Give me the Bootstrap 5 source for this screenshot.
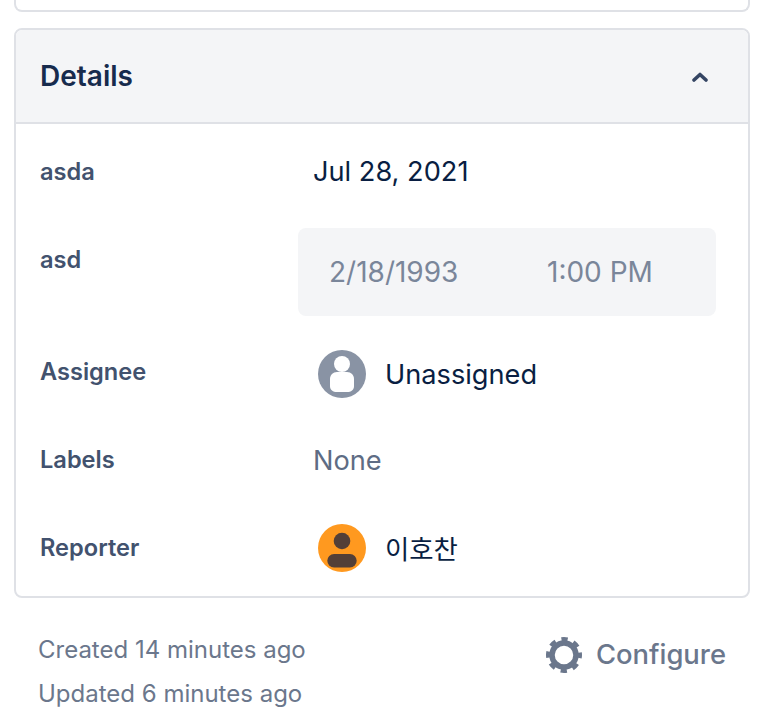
<!DOCTYPE html>
<html lang="en">
<head>
    <meta charset="UTF-8">
    <title>Details</title>
    <link href="https://cdn.jsdelivr.net/npm/bootstrap@5.3.0/dist/css/bootstrap.min.css" rel="stylesheet">
    <style>
        body {
            font-family: Inter, "Noto Sans CJK KR", sans-serif;
            background: #fff;
            color: #091e42;
        }
        .page-wrap { padding: 0 34px 0 14px; }
        .prev-panel {
            height: 12px;
            border: 2px solid #dfe1e6;
            border-top: 0;
            border-radius: 0 0 8px 8px;
            margin-bottom: 16px;
        }
        .details-panel {
            border: 2px solid #dfe1e6;
            border-radius: 8px;
            --bs-card-inner-border-radius: 6px;
        }
        .details-head {
            height: 94px;
            padding: 2px 40px 0 24px;
            background: #f4f5f7;
            border-bottom: 2px solid #dfe1e6;
        }
        .details-title {
            font-size: 28px;
            font-weight: 600;
            color: #172b4d;
            margin: 0;
        }
        .details-body { padding: 16px 32px 24px 24px; }
        .field-label {
            width: 258px;
            flex-shrink: 0;
            padding-top: 8px;
            font-size: 23.6px;
            font-weight: 600;
            line-height: 48px;
            color: #42526e;
        }
        .field-value { flex-grow: 1; font-size: 27.2px; line-height: 48px; }
        .gap-a { margin-bottom: 32px; }
        .gap-b { margin-bottom: 24px; }
        .gap-c { margin-bottom: 30px; }
        .text-value { padding: 8px 0 0 15px; }
        .text-none { color: #5e6c84; padding-top: 9px; margin-bottom: -1px; }
        .date-box {
            height: 88px;
            padding-left: 31px;
            border-radius: 8px;
            background: #f4f5f7;
            color: #7a869a;
            font-size: 28px;
            line-height: 88px;
        }
        .date-box span:first-child { width: 218px; }
        .person-value { height: 58px; padding: 10px 0 0 20px; }
        .person-value.low { height: 56px; padding-top: 8px; }
        .person-name { margin-left: 19px; padding-top: 1px; }
        .name-ko { font-size: 26.4px; }
        .page-foot { padding: 30px 24px 0 24px; color: #6b778c; }
        .stamps { font-size: 24px; line-height: 44px; }
        .configure { font-size: 27.4px; font-weight: 500; gap: 14px; margin-top: 3px; height: 48px; }
    </style>
</head>
<body>
    <div class="page-wrap">
        <div class="prev-panel"></div>

        <div class="card details-panel">
            <div class="card-header details-head d-flex align-items-center justify-content-between">
                <h2 class="details-title">Details</h2>
                <svg width="16" height="12" viewBox="0 0 16 12" class="d-block">
                    <path d="M2 9 8 3.500l6 5.500" fill="none" stroke="#344563" stroke-width="3.600" stroke-linecap="round" stroke-linejoin="round"/>
                </svg>
            </div>
            <div class="card-body details-body">
                <div class="d-flex gap-a">
                    <div class="field-label">asda</div>
                    <div class="field-value text-value">Jul 28, 2021</div>
                </div>
                <div class="d-flex gap-b">
                    <div class="field-label">asd</div>
                    <div class="field-value date-box d-flex">
                        <span>2/18/1993</span>
                        <span>1:00 PM</span>
                    </div>
                </div>
                <div class="d-flex gap-c">
                    <div class="field-label">Assignee</div>
                    <div class="field-value person-value d-flex align-items-start">
                        <svg width="48" height="48" viewBox="0 0 48 48" class="flex-shrink-0">
                            <circle cx="24" cy="24" r="24" fill="#8993a4"/>
                            <circle cx="24" cy="14" r="8" fill="#fff"/>
                            <path d="M12 29c0-4 3-7 7-7h10c4 0 7 3 7 7v7c0 4-3 6-7 6H19c-4 0-7-2-7-6z" fill="#fff"/>
                        </svg>
                        <span class="person-name">Unassigned</span>
                    </div>
                </div>
                <div class="d-flex gap-a">
                    <div class="field-label">Labels</div>
                    <div class="field-value text-value text-none">None</div>
                </div>
                <div class="d-flex">
                    <div class="field-label">Reporter</div>
                    <div class="field-value person-value low d-flex align-items-start">
                        <svg width="48" height="48" viewBox="0 0 48 48" class="flex-shrink-0">
                            <circle cx="24" cy="24" r="24" fill="#ff991f"/>
                            <circle cx="24" cy="17" r="8.300" fill="#533f37"/>
                            <rect x="9.300" y="30" width="29.400" height="13.500" rx="6.750" fill="#533f37"/>
                        </svg>
                        <span class="person-name name-ko">이호찬</span>
                    </div>
                </div>
            </div>
        </div>

        <div class="page-foot d-flex justify-content-between align-items-start">
            <div class="stamps">
                <div>Created 14 minutes ago</div>
                <div>Updated 6 minutes ago</div>
            </div>
            <div class="configure d-flex align-items-center">
                <svg width="36" height="36" viewBox="0 0 36 36">
                    <circle cx="18" cy="18" r="12" fill="none" stroke="#6b778c" stroke-width="5.500"/>
                    <circle cx="18" cy="18" r="15.500" fill="none" stroke="#6b778c" stroke-width="5" stroke-dasharray="6.170 6.000" stroke-dashoffset="3"/>
                </svg>
                <span>Configure</span>
            </div>
        </div>
    </div>

    <script src="https://cdn.jsdelivr.net/npm/bootstrap@5.3.0/dist/js/bootstrap.bundle.min.js"></script>
</body>
</html>
